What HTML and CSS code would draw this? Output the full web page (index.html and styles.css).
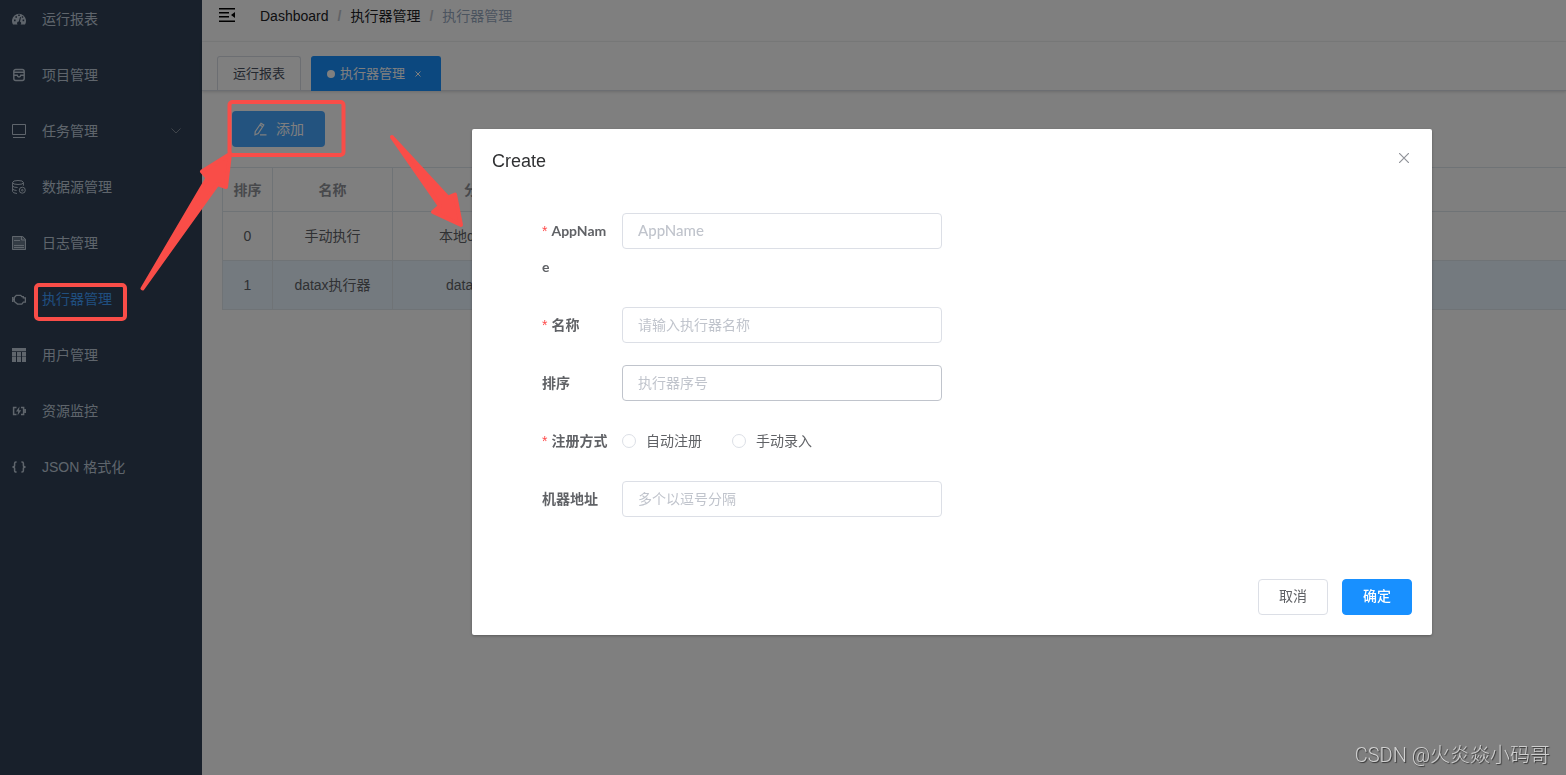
FILE: index.html
```html
<!DOCTYPE html>
<html lang="zh-CN">
<head>
<meta charset="utf-8">
<title>执行器管理</title>
<link rel="stylesheet" href="styles.css">
</head>
<body>
<div class="app">
  <nav class="sidebar">
    <a class="menu-item" href="#">
      <svg class="icon" viewBox="0 0 14 14"><path fill="currentColor" fill-rule="evenodd" d="M1 12.400A7 7 0 1 1 13 12.400H8.600A1.800 1.800 0 0 0 8 9.600L9 5.200 8 5 6.800 9.400A1.800 1.800 0 0 0 5.500 12.400ZM2 7.600h1.600v1.600H2ZM3.400 4.200H5v1.600H3.400ZM6.200 2.600h1.600v1.400H6.200ZM9.800 4.200h1.400v1.600H9.800ZM10.600 7.600h1.600v1.600h-1.600Z"/></svg>
      <span>运行报表</span>
    </a>
    <a class="menu-item" href="#">
      <svg class="icon" viewBox="0 0 14 14"><g fill="none" stroke="currentColor" stroke-width="1.400"><rect x="1.800" y="1.500" width="10.400" height="11" rx="2"/><path d="M2 4.300h10M2 7.200h3.200q.3 1.800 1.800 1.800t1.800-1.800H12"/></g></svg>
      <span>项目管理</span>
    </a>
    <a class="menu-item" href="#">
      <svg class="icon" viewBox="0 0 14 14"><path fill="none" stroke="currentColor" d="M.5.5h13v10H.5zM1 13.500h12"/></svg>
      <span>任务管理</span>
      <svg class="arrow" viewBox="0 0 10 6"><path fill="none" stroke="currentColor" d="M.5.5 5 5 9.500.5"/></svg>
    </a>
    <a class="menu-item" href="#">
      <svg class="icon" viewBox="0 0 14 14"><g fill="none" stroke="currentColor"><ellipse cx="6" cy="2.500" rx="5.400" ry="2"/><path d="M.6 2.500v9q0 1.500 4.400 2M11.400 2.500v3.200M.6 6q1 1.500 5 1.500M.6 9q1 1.300 4 1.500"/><circle cx="10.300" cy="10.200" r="3"/><circle cx="10.300" cy="10.200" r=".8"/></g></svg>
      <span>数据源管理</span>
    </a>
    <a class="menu-item" href="#">
      <svg class="icon" viewBox="0 0 14 14"><path fill="currentColor" fill-opacity=".4" d="M0 0h11l3 3v11H0z"/><path fill="none" stroke="currentColor" d="M.5.5h10l3 3v10H.5zM9.500.5v3.500h4M2 4.500h6M2 9.500h10M2 11.500h10"/></svg>
      <span>日志管理</span>
    </a>
    <a class="menu-item menu-item-active" href="#">
      <svg class="icon" viewBox="0 0 14 14"><path fill="none" stroke="currentColor" stroke-width="1.300" d="M.7 5v5M.7 7.500h1.600M4.300 3.300h4.400l1.200 1.300h1.400v1.200h2.100v4.400h-2l-1.600 1.900H5.500L2.300 9.500V5.500z"/></svg>
      <span>执行器管理</span>
    </a>
    <a class="menu-item" href="#">
      <svg class="icon" viewBox="0 0 14 14"><path fill="currentColor" d="M0 0h14v3.300H0zM0 4h4v4.500H0zM5 4h4v4.500H5zM10 4h4v4.500h-4zM0 9h4v5H0zM5 9h4v5H5zM10 9h4v5h-4z"/></svg>
      <span>用户管理</span>
    </a>
    <a class="menu-item" href="#">
      <svg class="icon" viewBox="0 0 14 14"><path fill="none" stroke="currentColor" stroke-width="1.500" d="M4.500 3.500H1.600v7H4.500M9 3.500h2.600v7H9M13.200 5v4"/><path fill="currentColor" d="M7.500 2.500 4 7.600h2.200L5.500 11.500 9.200 6.300H7z"/></svg>
      <span>资源监控</span>
    </a>
    <a class="menu-item" href="#">
      <svg class="icon" viewBox="0 0 14 14"><path fill="none" stroke="currentColor" stroke-width="1.500" d="M4.600 2H4Q2.600 2 2.600 3.500v2Q2.600 7 .4 7q2.200 0 2.200 1.500v2Q2.600 12 4 12h.6M9.400 2h.6q1.400 0 1.400 1.500v2Q11.400 7 13.600 7q-2.200 0-2.200 1.500v2Q11.400 12 10 12h-.6"/></svg>
      <span>JSON 格式化</span>
    </a>
  </nav>
  <div class="main">
    <header class="navbar">
      <button class="hamburger" type="button" aria-label="Toggle">
        <svg viewBox="0 0 16 14"><path fill="currentColor" d="M0 0h16v1.500H0zM0 4h10v1.500H0zM0 8h10v1.500H0zM0 12.500h16V14H0zM16 4v6l-4-3z"/></svg>
      </button>
      <div class="breadcrumb">
        <a href="#">Dashboard</a><span class="separator">/</span><a href="#">执行器管理</a><span class="separator">/</span><span class="current">执行器管理</span>
      </div>
    </header>
    <div class="tags">
      <a class="tag" href="#">运行报表</a>
      <a class="tag tag-active" href="#"><span class="dot"></span>执行器管理<svg class="tag-close" viewBox="0 0 6 6"><path stroke="currentColor" d="m.5.5 5 5m0-5-5 5"/></svg></a>
    </div>
    <main class="content">
      <button class="add-button" type="button">
        <svg viewBox="0 0 14 14"><path fill="none" stroke="currentColor" stroke-width="1.200" d="M8 1.200 10.800 3 5.200 11.500 2 12.800 2.200 9.600zM7 3l2.700 1.800M7 12.800h6.500"/></svg>
        <span>添加</span>
      </button>
      <table class="table">
        <thead><tr><th class="col-order">排序</th><th class="col-name">名称</th><th class="col-group">分</th></tr></thead>
        <tbody>
          <tr><td>0</td><td>手动执行</td><td class="cell-local">本地d</td></tr>
          <tr class="row-current"><td>1</td><td>datax执行器</td><td class="cell-datax">data</td></tr>
        </tbody>
      </table>
    </main>
  </div>
</div>

<div class="overlay">
  <section class="dialog" role="dialog" aria-labelledby="dialog-title">
    <header class="dialog-header">
      <h2 id="dialog-title">Create</h2>
      <button class="dialog-close" type="button" aria-label="Close"><svg viewBox="0 0 10 10"><path stroke="currentColor" stroke-width="1.200" d="m0 0 10 10m0-10L0 10"/></svg></button>
    </header>
    <form class="form" id="create-form">
      <div class="form-item">
        <label class="label required" for="app-name">AppName</label>
        <input class="input input-latin" id="app-name" type="text" placeholder="AppName">
      </div>
      <div class="form-item">
        <label class="label required" for="title">名称</label>
        <input class="input" id="title" type="text" placeholder="请输入执行器名称">
      </div>
      <div class="form-item">
        <label class="label" for="order">排序</label>
        <input class="input input-hover" id="order" type="text" placeholder="执行器序号">
      </div>
      <div class="form-item" role="radiogroup" aria-labelledby="type-label">
        <span class="label required" id="type-label">注册方式</span>
        <div class="radios">
          <label class="radio"><input type="radio" name="type">自动注册</label>
          <label class="radio"><input type="radio" name="type">手动录入</label>
        </div>
      </div>
      <div class="form-item">
        <label class="label" for="address">机器地址</label>
        <input class="input" id="address" type="text" placeholder="多个以逗号分隔">
      </div>
    </form>
    <footer class="dialog-footer">
      <button class="button" type="button">取消</button>
      <button class="button button-primary" type="submit" form="create-form">确定</button>
    </footer>
  </section>
</div>

<svg class="annotations" width="1566" height="775" viewBox="0 0 1566 775" aria-hidden="true">
  <g fill="none" stroke="#f94d48" stroke-width="4">
    <rect x="229.500" y="102" width="114" height="53" rx="3"/>
    <rect x="36" y="285" width="89" height="34" rx="3"/>
  </g>
  <g fill="#f94d48" stroke="#f94d48" stroke-width="4" stroke-linejoin="round">
    <path d="M142.500 288.500 207.500 178 202 171.500 230 154 226 187 217.500 184z"/>
    <path d="M392 137 448 197.500 455 194.500 461 225 433 212 440 206z"/>
  </g>
</svg>
<div class="watermark">CSDN @火炎焱小码哥</div>
</body>
</html>
```

FILE: styles.css
```css
* { box-sizing: border-box; }

body {
  margin: 0;
  font-family: "Liberation Sans", "Noto Sans CJK SC", sans-serif;
  font-size: 14px;
  line-height: 16px;
  color: #606266;
  overflow: hidden;
}

a { color: inherit; text-decoration: none; }
button, input { font: inherit; }
button { cursor: pointer; }
svg { display: block; }

.app { display: flex; min-height: 100vh; }

.sidebar {
  display: flex;
  flex: none;
  flex-direction: column;
  gap: 18px;
  width: 202px;
  padding: 0 21px 0 12px;
  background: #304156;
}

.menu-item {
  display: flex;
  align-items: center;
  height: 38px;
  color: #bfcbd9;
}

.menu-item-active span { color: #409eff; }
.icon { width: 14px; height: 14px; margin-right: 16px; }
.arrow { width: 10px; height: 6px; margin-left: auto; color: #808a96; }

.main { flex: 1; min-width: 0; background: #fff; }

.navbar {
  display: flex;
  align-items: center;
  height: 42px;
  padding: 0 17px 10px;
  border-bottom: 1px solid #f4f5f6;
}

.hamburger { padding: 0 0 2px; border: 0; background: none; color: #000; }
.hamburger svg { width: 16px; height: 14px; }

.breadcrumb { display: flex; margin-left: 25px; color: #303133; }
.breadcrumb a { color: #202124; }
.breadcrumb .current { color: #97a8be; }
.separator { margin: 0 9px; color: #c0c4cc; font-weight: 700; }

.tags {
  display: flex;
  gap: 10px;
  height: 49px;
  padding: 14px 15px 0;
  border-bottom: 1px solid #d8dce5;
  box-shadow: 0 1px 3px rgba(0, 0, 0, .16);
}

.tag {
  display: flex;
  align-items: center;
  height: 35px;
  padding: 0 15px;
  border: 1px solid #d8dce5;
  border-bottom: 0;
  border-radius: 3px 3px 0 0;
  color: #495060;
  font-size: 13px;
}

.tag-active { border-color: #1890ff; background: #1890ff; color: #fff; }
.dot { width: 8px; height: 8px; margin-right: 5px; border-radius: 50%; background: #fff; }
.tag-close { width: 6px; height: 6px; margin: 0 4px 0 10px; }

.content { padding: 20px 0 0 20px; }

.add-button {
  display: flex;
  align-items: center;
  gap: 9px;
  height: 36px;
  margin: 0 0 20px 10px;
  padding: 0 21px;
  border: 0;
  border-radius: 4px;
  background: #46a6ff;
  color: #fff;
}

.add-button svg { width: 14px; height: 14px; }

.table {
  width: 100%;
  border-top: 1px solid #dfe6ec;
  border-left: 1px solid #dfe6ec;
  border-collapse: separate;
  border-spacing: 0;
  table-layout: fixed;
  text-align: center;
}

.table th, .table td {
  height: 49px;
  padding: 0;
  border-right: 1px solid #dfe6ec;
  border-bottom: 1px solid #dfe6ec;
}

.table th { height: 44px; color: #909399; }
.table th:last-child, .table td:last-child { border-right: 0; text-align: left; }
.col-order { width: 50px; }
.col-name { width: 120px; }
.table .col-group { padding-left: 71px; }
.table .cell-local { padding-left: 46px; }
.table .cell-datax { padding-left: 53px; }
.row-current { background: #e8f4ff; }

.overlay {
  position: fixed;
  inset: 0;
  display: flex;
  align-items: flex-start;
  padding: 129px 134px 0 472px;
  background: rgba(0, 0, 0, .5);
}

.dialog {
  flex: 1;
  border-radius: 2px;
  background: #fff;
  box-shadow: 0 1px 3px rgba(0, 0, 0, .3);
}

.dialog-header {
  display: flex;
  justify-content: space-between;
  padding: 20px 20px 10px;
}

.dialog-header h2 {
  margin: 0;
  color: #303133;
  font-size: 18px;
  font-weight: 400;
  line-height: 24px;
}

.dialog-close {
  display: flex;
  align-items: center;
  height: 18px;
  padding: 0 3px;
  border: 0;
  background: none;
  color: #909399;
}

.dialog-close svg { width: 10px; height: 10px; }

.form {
  display: flex;
  flex-direction: column;
  gap: 22px;
  width: 400px;
  margin-left: 70px;
  padding: 30px 0 52px;
  box-sizing: content-box;
  font-family: Lato, "Noto Sans CJK SC", sans-serif;
}

.form-item { display: flex; align-items: flex-start; }

.label {
  flex: none;
  width: 80px;
  padding-right: 12px;
  font-weight: 700;
  line-height: 36px;
  word-break: break-all;
}

.required::before {
  content: "*";
  margin-right: 4px;
  color: #ff4949;
  font-family: "Liberation Sans", sans-serif;
  font-weight: 400;
}

.input {
  flex: 1;
  min-width: 0;
  height: 36px;
  padding: 0 15px 2px;
  border: 1px solid #dcdfe6;
  border-radius: 4px;
  background: #fff;
  color: #606266;
}

.input-latin { font-size: 15px; font-weight: 500; }
.input-hover { border-color: #c0c4cc; }
.input::placeholder { color: #c0c4cc; }

.radios { display: flex; gap: 30px; }
.radio { display: flex; align-items: center; gap: 10px; height: 36px; }

.radio input {
  width: 14px;
  height: 14px;
  margin: 0;
  border: 1px solid #dcdfe6;
  border-radius: 50%;
  appearance: none;
}

.dialog-footer {
  display: flex;
  justify-content: flex-end;
  gap: 14px;
  padding: 10px 20px 20px;
}

.button {
  height: 36px;
  padding: 0 20px 2px;
  border: 1px solid #dcdfe6;
  border-radius: 4px;
  background: #fff;
  color: #606266;
}

.button-primary { border-color: #1890ff; background: #1890ff; color: #fff; font-weight: 500; }

.annotations { position: absolute; top: 0; left: 0; pointer-events: none; }

.watermark {
  position: fixed;
  right: 16px;
  bottom: 7px;
  color: #d0d0d0;
  font-family: Roboto, "Noto Sans CJK SC", sans-serif;
  font-size: 20px;
  font-weight: 300;
  line-height: 26px;
  text-shadow: 1px 1px 1px rgba(0, 0, 0, .6);
}
```
